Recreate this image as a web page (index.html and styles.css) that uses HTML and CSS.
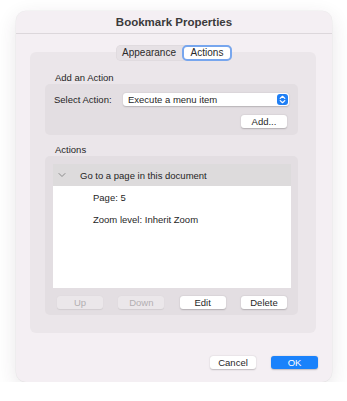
FILE: index.html
```html
<!DOCTYPE html>
<html>
<head>
<meta charset="utf-8">
<link rel="stylesheet" href="styles.css">
</head>
<body>
<div class="window">
  <div class="titlebar">Bookmark Properties</div>
  <div class="tabs">
    <div class="seg">
      <div class="tab">Appearance</div>
      <div class="tab selected">Actions</div>
    </div>
  </div>
  <div class="panel">
    <div class="label">Add an Action</div>
    <div class="group add-group">
      <div class="row">
        <span class="row-label">Select Action:</span>
        <div class="popup">
          <span>Execute a menu item</span>
          <span class="stepper">
            <svg width="7" height="9" viewBox="0 0 7 9"><path d="M1.2 3.4 L3.5 1.3 L5.8 3.4 M1.2 5.6 L3.5 7.7 L5.8 5.6" fill="none" stroke="#fff" stroke-width="1.2" stroke-linecap="round" stroke-linejoin="round"/></svg>
          </span>
        </div>
      </div>
      <div class="row right">
        <button class="btn">Add...</button>
      </div>
    </div>
    <div class="label">Actions</div>
    <div class="group actions-group">
      <div class="list">
        <div class="list-head">
          <svg class="chev" width="8" height="6" viewBox="0 0 8 6"><path d="M1 1.5 L4 4.5 L7 1.5" fill="none" stroke="#8a8a8a" stroke-width="1" stroke-linecap="round" stroke-linejoin="round"/></svg>
          <span>Go to a page in this document</span>
        </div>
        <div class="list-items">
          <div class="list-item">Page: 5</div>
          <div class="list-item">Zoom level: Inherit Zoom</div>
        </div>
      </div>
      <div class="btn-row">
        <button class="btn disabled">Up</button>
        <button class="btn disabled">Down</button>
        <button class="btn">Edit</button>
        <button class="btn">Delete</button>
      </div>
    </div>
  </div>
  <div class="footer">
    <button class="btn">Cancel</button>
    <button class="btn primary">OK</button>
  </div>
</div>
</body>
</html>
```
FILE: styles.css
```css
html, body {
  margin: 0;
  padding: 0;
  background: #ffffff;
}
body {
  font-family: "Liberation Sans", Arial, sans-serif;
  font-size: 9.5px;
  color: #1f1f1f;
  padding: 11px 0 0 16px;
}
.window {
  width: 316px;
  height: 371px;
  box-sizing: border-box;
  background: #f4eff3;
  border-radius: 10px;
  box-shadow: 0 6px 20px rgba(60, 40, 60, 0.12), 0 0 0 0.5px rgba(0,0,0,0.05);
  display: flex;
  flex-direction: column;
}
.titlebar {
  height: 22px;
  line-height: 22px;
  text-align: center;
  font-weight: bold;
  font-size: 11.5px;
  color: #3b3a3b;
  border-bottom: 1px solid #dcd7db;
}
.tabs {
  display: flex;
  justify-content: center;
  margin-top: 11px;
  position: relative;
  z-index: 1;
}
.seg {
  display: flex;
  background: #e6e1e5;
  border-radius: 5px;
  height: 16px;
  align-items: center;
  box-shadow: inset 0 0 0 0.5px rgba(0,0,0,0.05);
}
.tab {
  height: 16px;
  line-height: 16px;
  color: #2a2a2a;
  font-size: 10px;
  box-sizing: border-box;
  text-align: center;
}
.tab:first-child {
  width: 66px;
}
.tab.selected {
  width: 50px;
  background: #fff;
  border: 2px solid #77a6ee;
  border-radius: 5px;
  line-height: 12px;
}
.panel {
  margin: -9px 16px 0 14px;
  height: 281px;
  box-sizing: border-box;
  background: #ebe6ea;
  border-radius: 6px;
  padding: 20px 0 0 15px;
}
.label {
  height: 12px;
  line-height: 12px;
  padding-left: 10px;
}
.group {
  width: 253px;
  box-sizing: border-box;
  background: #e3dee2;
  border-radius: 5px;
}
.add-group {
  height: 51px;
  padding: 9px 9px 0 9px;
  margin-bottom: 9px;
}
.row {
  display: flex;
  align-items: center;
}
.row.right {
  justify-content: flex-end;
  margin-top: 9px;
  padding-right: 2px;
}
.row-label {
  width: 69px;
}
.popup {
  flex: 1;
  height: 13px;
  background: #fff;
  border-radius: 3px;
  box-shadow: 0 0.5px 1.5px rgba(0,0,0,0.2);
  display: flex;
  align-items: center;
  justify-content: space-between;
  padding-left: 5px;
  padding-right: 1px;
}
.stepper {
  width: 11px;
  height: 11px;
  background: #1f7ff5;
  border-radius: 3px;
  display: flex;
  align-items: center;
  justify-content: center;
}
.btn {
  font-family: inherit;
  font-size: 9.5px;
  color: #1f1f1f;
  width: 46px;
  height: 13px;
  padding: 0;
  border: none;
  border-radius: 3px;
  background: #fff;
  box-shadow: 0 0.5px 1.5px rgba(0,0,0,0.22);
  line-height: 13px;
}
.btn.disabled {
  background: #ebe7ea;
  color: #b3afb2;
  box-shadow: 0 0.5px 1px rgba(0,0,0,0.08);
}
.btn.primary {
  background: #1a82fb;
  color: #fff;
  width: 47px;
}
.actions-group {
  height: 159px;
  padding: 8px 7px 0 8px;
}
.list {
  height: 124px;
  background: #fff;
}
.list-head {
  height: 22px;
  background: #dddbdc;
  display: flex;
  align-items: center;
}
.chev {
  margin-left: 5px;
  margin-right: 14px;
}
.list-items {
  padding-top: 1px;
}
.list-item {
  height: 22px;
  line-height: 22px;
  padding-left: 40px;
}
.btn-row {
  display: flex;
  justify-content: space-between;
  padding: 8px 4px 0 4px;
}
.footer {
  margin-top: auto;
  display: flex;
  justify-content: flex-end;
  gap: 15px;
  padding: 0 14px 13px 0;
}
```
